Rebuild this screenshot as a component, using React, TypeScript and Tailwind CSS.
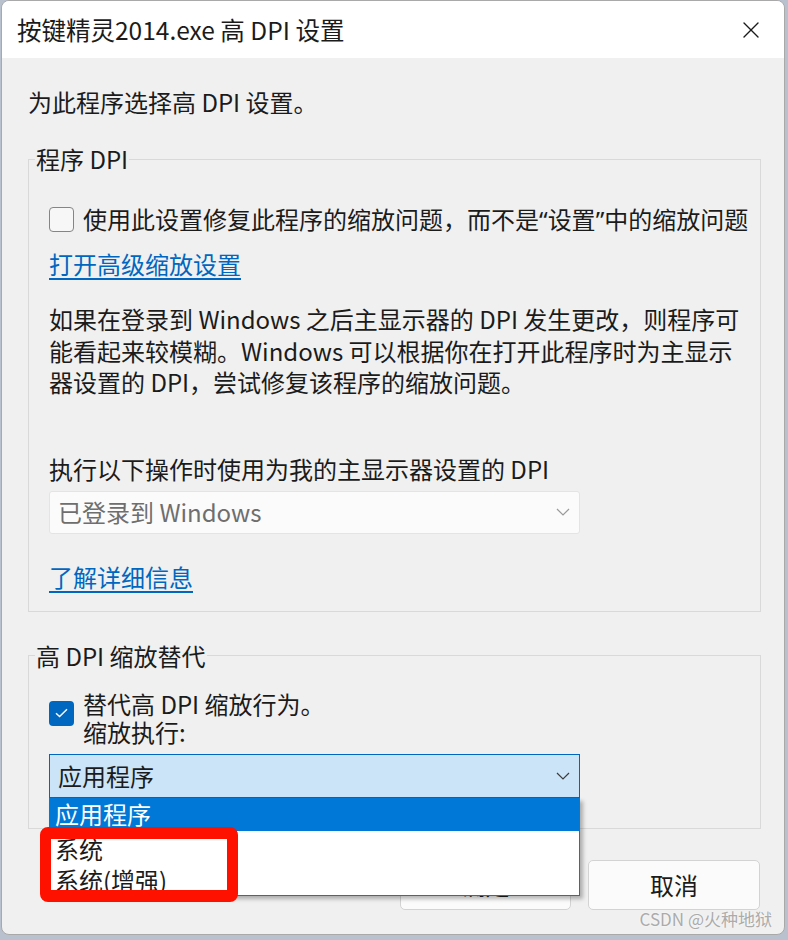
import { X } from 'lucide-react';

function Chevron({ className = '' }: { className?: string }) {
  return (
    <svg width="14" height="8" viewBox="0 0 14 8" className={className}>
      <path d="M1 1l6 6 6-6" fill="none" stroke="currentColor" strokeWidth="1.2" />
    </svg>
  );
}

function Checkbox({ checked = false }: { checked?: boolean }) {
  if (checked) {
    return (
      <span className="flex h-[25px] w-[25px] shrink-0 items-center justify-center rounded-[4px] bg-[#0067c0]">
        <svg width="13" height="10" viewBox="0 0 13 10">
          <path d="M1 5.2l3.6 3.4L12 1.2" fill="none" stroke="#fff" strokeWidth="1.4" />
        </svg>
      </span>
    );
  }
  return (
    <span className="h-[25px] w-[25px] shrink-0 rounded-[4px] border border-[#858585] bg-[#f7f7f7]" />
  );
}

const latin = '"Noto Sans", sans-serif';

export default function App() {
  return (
    <div
      className="h-[940px] w-[788px] overflow-hidden bg-[#b8c1cd] text-[24px] text-[#1b1b1b]"
      style={{ fontFamily: '"Noto Sans CJK SC", "Noto Sans", sans-serif' }}
    >
      <div className="relative ml-[1px] flex h-[935px] w-[784px] flex-col overflow-hidden rounded-[8px] border border-[#a9a9a9] bg-[#f0f0f0]">
        {/* title bar */}
        <div className="flex h-[57px] shrink-0 items-center justify-between bg-white pl-[15px] pr-[19px]">
          <span className="text-[24.5px] leading-[32px]">按键精灵2014.exe 高 DPI 设置</span>
          <X size={28} strokeWidth={1.2} className="text-[#1b1b1b]" />
        </div>

        <div className="flex flex-col pl-[26px] pr-[23px] pt-[28px]">
          <p className="leading-[32px]">为此程序选择高 DPI 设置。</p>

          <fieldset className="mt-[25px] min-w-0 border border-[#d9d9d9] px-[6px] pb-[18px]">
            <legend className="px-[1px] leading-[32px]">程序 DPI</legend>
            <div className="px-[14px] pt-[28px]">
              <label className="flex h-[32px] items-center gap-[9px] whitespace-nowrap">
                <Checkbox />
                <span>
                  使用此设置修复此程序的缩放问题，而不是
                  <span style={{ fontFamily: latin }}>“</span>设置
                  <span style={{ fontFamily: latin }}>”</span>中的缩放问题
                </span>
              </label>
              <a className="mt-[13px] block w-fit leading-[32px] text-[#0067c0] underline underline-offset-[4px]">
                打开高级缩放设置
              </a>
              <p className="mt-[23px] whitespace-nowrap leading-[31.5px]">
                如果在登录到 Windows 之后主显示器的 DPI 发生更改，则程序可
                <br />
                能看起来较模糊。Windows 可以根据你在打开此程序时为主显示
                <br />
                器设置的 DPI，尝试修复该程序的缩放问题。
              </p>
              <p className="mt-[55px] leading-[32px]">执行以下操作时使用为我的主显示器设置的 DPI</p>
              <div className="mt-[6px] flex h-[43px] w-[531px] items-center justify-between rounded-[3px] border border-[#e4e4e4] bg-[#fbfbfb] pl-[8px] pr-[9px] text-[#6e6e6e]">
                <span>已登录到 Windows</span>
                <Chevron className="text-[#9a9a9a]" />
              </div>
              <a className="mt-[27px] block w-fit leading-[32px] text-[#0067c0] underline underline-offset-[4px]">
                了解详细信息
              </a>
            </div>
          </fieldset>

          <fieldset className="mt-[28px] min-w-0 border border-[#d9d9d9] px-[6px] pb-[30px]">
            <legend className="px-[1px] leading-[32px]">高 DPI 缩放替代</legend>
            <div className="px-[14px] pt-[18px]">
              <label className="flex items-start gap-[9px]">
                <span className="mt-[11px]">
                  <Checkbox checked />
                </span>
                <span className="leading-[28px]">
                  替代高 DPI 缩放行为。
                  <br />
                  缩放执行:
                </span>
              </label>
              <div className="relative mt-[8px] w-[531px]">
                <div className="flex h-[44px] items-center justify-between border border-[#0067c0] bg-[#cce4f7] pl-[8px] pr-[9px]">
                  <span>应用程序</span>
                  <Chevron className="text-[#3c3c3c]" />
                </div>
                <ul className="absolute left-0 top-full w-full border border-t-0 border-[#2b6cb5] bg-white shadow-[3px_3px_4px_rgba(0,0,0,0.28)]">
                  <li className="flex h-[33px] items-center bg-[#0078d7] pl-[5px] text-white">应用程序</li>
                  <li className="mt-[3px] flex h-[31px] items-center pl-[5px]">系统</li>
                  <li className="flex h-[30px] items-center pl-[5px]">系统(增强)</li>
                </ul>
              </div>
            </div>
          </fieldset>

          <div className="mt-[31px] flex justify-end gap-[17px] pr-[1px]">
            <button className="flex h-[50px] w-[171px] items-center justify-center rounded-[5px] border border-[#d3d3d3] bg-[#fbfbfb]">
              确定
            </button>
            <button className="flex h-[50px] w-[172px] items-center justify-center rounded-[5px] border border-[#d3d3d3] bg-[#fbfbfb]">
              取消
            </button>
          </div>
        </div>

        {/* annotation box */}
        <div className="absolute left-[38px] top-[826px] z-10 h-[75px] w-[198px] rounded-[8px] border-x-[11px] border-y-[12px] border-[#ff1100]" />

        {/* watermark */}
        <span className="absolute bottom-[3px] right-[12px] text-[17px] leading-[24px] text-[#ababab] [text-shadow:0_0_2px_#fff]">
          CSDN @火种地狱
        </span>
      </div>
    </div>
  );
}
